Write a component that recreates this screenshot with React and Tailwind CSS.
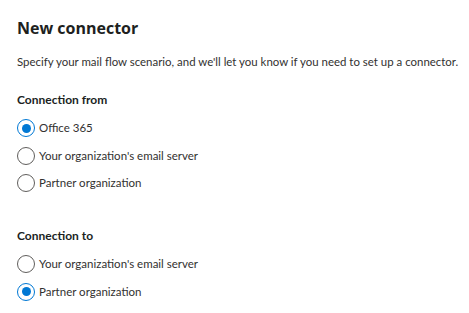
import React from "react";

function Radio({ checked, label }) {
  return (
    <div className="flex items-center h-[27.5px]">
      <span
        className={
          "flex items-center justify-center w-[18px] h-[18px] rounded-full border shrink-0 " +
          (checked ? "border-[#0078d4]" : "border-[#605e5c]")
        }
      >
        {checked && <span className="w-[9px] h-[9px] rounded-full bg-[#0078d4]" />}
      </span>
      <span className="ml-[4px] text-[11.5px] leading-[20px] text-[#323130]">{label}</span>
    </div>
  );
}

export default function App() {
  return (
    <div
      className="w-[469px] h-[313px] overflow-hidden bg-white pl-[17px] pt-[14px] text-[#323130]"
      style={{ fontFamily: 'Lato, "Open Sans", sans-serif' }}
    >
      <h1
        className="text-[16px] font-bold leading-[28px] text-[#201f1e]"
        style={{ fontFamily: '"Open Sans", sans-serif' }}
      >
        New connector
      </h1>
      <p className="mt-[10px] whitespace-nowrap text-[11.45px] leading-[20px]">
        Specify your mail flow scenario, and we'll let you know if you need to set up a connector.
      </p>
      <div className="mt-[18px] text-[12px] font-bold leading-[20px] text-[#201f1e]">Connection from</div>
      <div className="mt-[4.5px] flex flex-col">
        <Radio checked label="Office 365" />
        <Radio label="Your organization's email server" />
        <Radio label="Partner organization" />
      </div>
      <div className="mt-[29px] text-[12px] font-bold leading-[20px] text-[#201f1e]">Connection to</div>
      <div className="mt-[4.5px] flex flex-col">
        <Radio label="Your organization's email server" />
        <Radio checked label="Partner organization" />
      </div>
    </div>
  );
}
